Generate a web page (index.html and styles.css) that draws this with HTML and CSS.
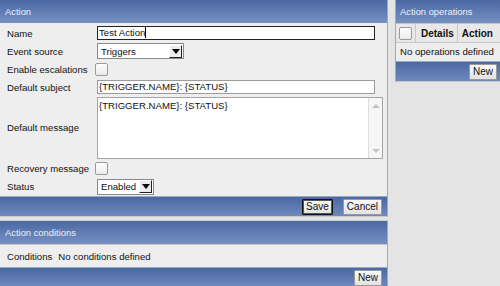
FILE: index.html
```html
<!DOCTYPE html>
<html lang="en">
<head>
    <meta charset="UTF-8">
    <title>Action</title>
    <link rel="stylesheet" href="styles.css">
</head>
<body>
    <div class="main">
        <div class="panel">
            <div class="panel-title">Action</div>
            <div class="form">
                <label class="lbl">Name</label>
                <div class="field"><div class="text-input focused">Test Action<span class="caret"></span></div></div>

                <label class="lbl">Event source</label>
                <div class="field">
                    <div class="select wide"><span>Triggers</span><span class="drop"><i></i></span></div>
                </div>

                <label class="lbl">Enable escalations</label>
                <div class="field"><span class="check"></span></div>

                <label class="lbl">Default subject</label>
                <div class="field"><div class="text-input">{TRIGGER.NAME}: {STATUS}</div></div>

                <label class="lbl">Default message</label>
                <div class="field">
                    <div class="textarea">
                        <div class="ta-text">{TRIGGER.NAME}: {STATUS}</div>
                        <div class="scroll"><i class="up"></i><i class="down"></i></div>
                    </div>
                </div>

                <label class="lbl">Recovery message</label>
                <div class="field"><span class="check"></span></div>

                <label class="lbl">Status</label>
                <div class="field">
                    <div class="select small"><span>Enabled</span><span class="drop"><i></i></span></div>
                </div>
            </div>
            <div class="panel-foot">
                <button class="btn default">Save</button>
                <button class="btn">Cancel</button>
            </div>
        </div>

        <div class="panel second">
            <div class="panel-title">Action conditions</div>
            <div class="cond-row"><span>Conditions</span><span>No conditions defined</span></div>
            <div class="panel-foot">
                <button class="btn">New</button>
            </div>
        </div>
    </div>

    <div class="side">
        <div class="panel">
            <div class="panel-title">Action operations</div>
            <div class="ops-head">
                <div class="cell chk"><span class="check"></span></div>
                <div class="cell details">Details</div>
                <div class="cell last">Action</div>
            </div>
            <div class="ops-row">No operations defined</div>
            <div class="panel-foot">
                <button class="btn">New</button>
            </div>
        </div>
    </div>
</body>
</html>
```

FILE: styles.css
```css
body {
    margin: 0;
    background-color: #e4e4e4;
    font-family: "Liberation Sans", Arial, sans-serif;
    font-size: 9.6px;
    color: #111;
    display: flex;
    gap: 7px;
    height: 286px;
    overflow: hidden;
    white-space: nowrap;
}

.main {
    width: 388px;
    flex-shrink: 0;
    display: flex;
    flex-direction: column;
    gap: 3px;
}

.side {
    flex: 1;
    min-width: 0;
}

.panel {
    background-color: #eeeeee;
    border-right: 1px solid #a8a8a8;
    border-bottom: 1px solid #c8c8c8;
}

.side .panel {
    border-left: 1px solid #a8a8a8;
    border-right: none;
}

.panel.second {
    border-top: 1px solid #cfcfcf;
}

.panel-title {
    height: 23px;
    line-height: 23px;
    padding-left: 5px;
    font-size: 9.4px;
    color: #eef1f8;
    background: linear-gradient(to bottom, #4a68a2, #7690c2);
}

.side .panel-title {
    padding-left: 4px;
}

.panel-foot {
    height: 19px;
    display: flex;
    justify-content: flex-end;
    align-items: center;
    gap: 10px;
    padding-right: 5px;
    background: linear-gradient(to bottom, #4a68a2, #6e89bd);
    border-top: 1px solid #9aa8c0;
}

.side .panel-foot {
    padding-right: 3px;
}

.btn {
    font-family: inherit;
    font-size: 10px;
    height: 16px;
    padding: 0 3px;
    background: linear-gradient(to bottom, #fafafa, #e2e2e2);
    border: 1px solid #9a9a9a;
    color: #111;
    border-radius: 1px;
    line-height: 13px;
}

.btn.default {
    border: 1px solid #111;
    box-shadow: inset 0 0 0 1px #555;
}

/* form grid */
.form {
    display: grid;
    grid-template-columns: 90px 1fr;
    grid-template-rows: 18px 18px 18px 18px 63px 18px 19px;
    padding: 1px 0 0 7px;
}

.lbl {
    display: flex;
    align-items: center;
}

.field {
    display: flex;
    align-items: center;
}

.text-input {
    width: 275px;
    height: 12px;
    line-height: 12px;
    border: 1px solid #9c9c9c;
    background-color: #fff;
    padding-left: 1px;
}

.text-input.focused {
    border-color: #222;
}

.caret {
    display: inline-block;
    width: 1px;
    height: 11px;
    background-color: #000;
    vertical-align: -2px;
}

.select {
    height: 14px;
    border: 1px solid #8a8a8a;
    background-color: #fff;
    display: flex;
    justify-content: space-between;
    align-items: center;
    padding-left: 3px;
}

.select.wide {
    width: 82px;
}

.select.small {
    width: 52px;
}

.drop {
    width: 13px;
    height: 13px;
    margin-right: 1px;
    background-color: #ececec;
    border: 1px solid;
    border-color: #fff #222 #222 #fff;
    box-sizing: border-box;
    display: flex;
    align-items: center;
    justify-content: center;
}

.drop i {
    border-left: 4px solid transparent;
    border-right: 4px solid transparent;
    border-top: 5px solid #000;
}

.check {
    display: inline-block;
    width: 11px;
    height: 11px;
    margin-left: -2px;
    border: 1px solid #9a9a9a;
    border-radius: 2px;
    background: linear-gradient(to bottom, #fdfdfd, #ececec);
}

.textarea {
    width: 284px;
    height: 60px;
    border: 1px solid #a4a4a4;
    background-color: #fff;
    display: flex;
    justify-content: space-between;
}

.ta-text {
    padding: 2px 0 0 1px;
}

.scroll {
    width: 13px;
    border-left: 1px solid #ddd;
    background-color: #f6f6f6;
    display: flex;
    flex-direction: column;
    justify-content: space-between;
    align-items: center;
    padding: 6px 0 5px;
}

.scroll .up {
    border-left: 4px solid transparent;
    border-right: 4px solid transparent;
    border-bottom: 4px solid #c4c4c4;
}

.scroll .down {
    border-left: 4px solid transparent;
    border-right: 4px solid transparent;
    border-top: 4px solid #c4c4c4;
}

.cond-row {
    height: 22px;
    display: flex;
    align-items: center;
    gap: 6px;
    padding-left: 7px;
    border-top: 1px solid #c4c4c4;
}

/* operations table */
.ops-head {
    display: flex;
    height: 18px;
    border-top: 1px solid #c4c4c4;
    border-bottom: 1px solid #c8c8c8;
    background-color: #e8e8e8;
    font-weight: bold;
    font-size: 10px;
}

.cell {
    display: flex;
    align-items: center;
    padding: 0 4px;
    border-right: 1px solid #c8c8c8;
}

.cell.chk {
    width: 11px;
    padding: 0 3px 0 5px;
}

.cell.details {
    padding: 0 3px 0 5px;
}

.cell.last {
    border-right: none;
}

.ops-row {
    height: 18px;
    line-height: 18px;
    padding-left: 4px;
}
```
